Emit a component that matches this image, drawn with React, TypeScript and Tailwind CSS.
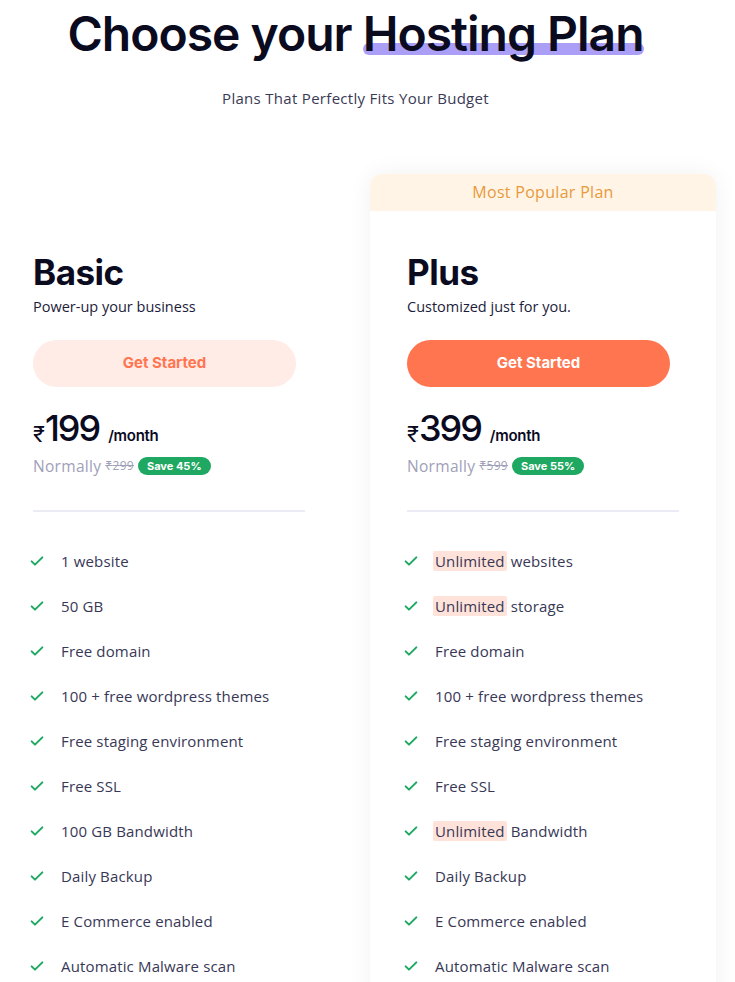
import React from "react";

const Check = () => (
  <svg width="16" height="16" viewBox="0 0 24 24" fill="none" stroke="#1fa862" strokeWidth="3" strokeLinecap="round" strokeLinejoin="round" className="shrink-0">
    <path d="M4 12.5l5 5L20 6.5" />
  </svg>
);

type Feat = { hl?: string; text: string };

const basicFeats: Feat[] = [
  { text: "1 website" },
  { text: "50 GB" },
  { text: "Free domain" },
  { text: "100 + free wordpress themes" },
  { text: "Free staging environment" },
  { text: "Free SSL" },
  { text: "100 GB Bandwidth" },
  { text: "Daily Backup" },
  { text: "E Commerce enabled" },
  { text: "Automatic Malware scan" },
];

const plusFeats: Feat[] = [
  { hl: "Unlimited", text: "websites" },
  { hl: "Unlimited", text: "storage" },
  { text: "Free domain" },
  { text: "100 + free wordpress themes" },
  { text: "Free staging environment" },
  { text: "Free SSL" },
  { hl: "Unlimited", text: "Bandwidth" },
  { text: "Daily Backup" },
  { text: "E Commerce enabled" },
  { text: "Automatic Malware scan" },
];

const body = { fontFamily: '"Open Sans", "Noto Sans", sans-serif' };
const head = { fontFamily: 'Inter, "Noto Sans", sans-serif' };

function Plan({
  name,
  tagline,
  primary,
  price,
  normal,
  save,
  feats,
}: {
  name: string;
  tagline: string;
  primary: boolean;
  price: string;
  normal: string;
  save: string;
  feats: Feat[];
}) {
  return (
    <div className="flex flex-col">
      <div className="pt-[41px]">
        <h2 style={head} className="text-[35px] leading-[40px] font-bold text-[#0b0b1f] tracking-[-0.5px]">
          {name}
        </h2>
        <p style={body} className="mt-[5px] text-[14.5px] leading-[20px] text-[#1c1c3a]">
          {tagline}
        </p>
      </div>
      <button
        style={head}
        className={
          primary
            ? "mt-[23px] w-[263px] h-[47px] rounded-full bg-[#ff7550] text-white text-[15px] font-bold"
            : "mt-[23px] w-[263px] h-[47px] rounded-full bg-[#ffece7] text-[#ff7550] text-[15px] font-bold"
        }
      >
        Get Started
      </button>
      <div style={head} className="mt-[19px] flex items-end text-[#0b0b1f]">
        <span className="text-[22px] leading-[28px] mb-[2px]">₹</span>
        <span className="text-[36px] leading-[44px] font-medium tracking-[-2px]">{price}</span>
        <span className="ml-[9px] mb-[4px] text-[15px] leading-[20px] font-semibold tracking-[-0.3px]">/month</span>
      </div>
      <div className="mt-[5px] flex items-center">
        <span style={body} className="text-[15.5px] text-[#a0a0b8] tracking-[0.3px]">Normally</span>
        <span style={body} className="ml-[4px] text-[12px] text-[#a0a0b8] line-through tracking-[0.3px]">₹{normal}</span>
        <span style={head} className="ml-[4px] h-[18px] px-[9px] rounded-full bg-[#1fa862] text-white text-[11px] font-bold flex items-center">
          Save {save}
        </span>
      </div>
      <div className="mt-[32px] w-[272px] h-[2px] bg-[#ebebf5]" />
      <ul style={body} className="mt-[39px] flex flex-col gap-[24px]">
        {feats.map((f, i) => (
          <li key={i} className="flex items-center h-[21px] -ml-[4px]">
            <Check />
            <span className="ml-[16px] text-[15px] text-[#383856] whitespace-nowrap tracking-[0.15px]">
              {f.hl && (
                <span className="bg-[#ffe3da] rounded-[2px] px-[2px] -ml-[2px] mr-[4px]">{f.hl}</span>
              )}
              {f.text}
            </span>
          </li>
        ))}
      </ul>
    </div>
  );
}

export default function App() {
  return (
    <div className="w-[735px] h-[982px] bg-white overflow-hidden relative">
      <div className="flex flex-col items-center pr-[24px]">
        <h1 style={head} className="pt-[5px] text-[48px] leading-[58px] font-semibold text-[#0b0b1f] tracking-[-1px] whitespace-nowrap">
          Choose your{" "}
          <span className="relative inline-block">
            <span className="absolute left-0 right-0 top-[38px] h-[12px] bg-[#ab9ef7] rounded-full" />
            <span className="relative">Hosting Plan</span>
          </span>
        </h1>
        <p style={body} className="mt-[24px] text-[15px] text-[#3a3a55] tracking-[0.3px]">
          Plans That Perfectly Fits Your Budget
        </p>
      </div>
      <div className="mt-[64px] flex items-start pl-[33px]">
        <div className="w-[271px] pt-[37px]">
          <Plan
            name="Basic"
            tagline="Power-up your business"
            primary={false}
            price="199"
            normal="299"
            save="45%"
            feats={basicFeats}
          />
        </div>
        <div className="ml-[66px] w-[346px] h-[900px] bg-white rounded-t-[12px] shadow-[0_0_24px_rgba(0,0,0,0.06)] overflow-hidden">
          <div style={body} className="h-[37px] bg-[#fff4e6] flex items-center justify-center text-[16px] text-[#e89a3c] tracking-[0.3px]">
            Most Popular Plan
          </div>
          <div className="px-[37px]">
            <Plan
              name="Plus"
              tagline="Customized just for you."
              primary={true}
              price="399"
              normal="599"
              save="55%"
              feats={plusFeats}
            />
          </div>
        </div>
      </div>
    </div>
  );
}
